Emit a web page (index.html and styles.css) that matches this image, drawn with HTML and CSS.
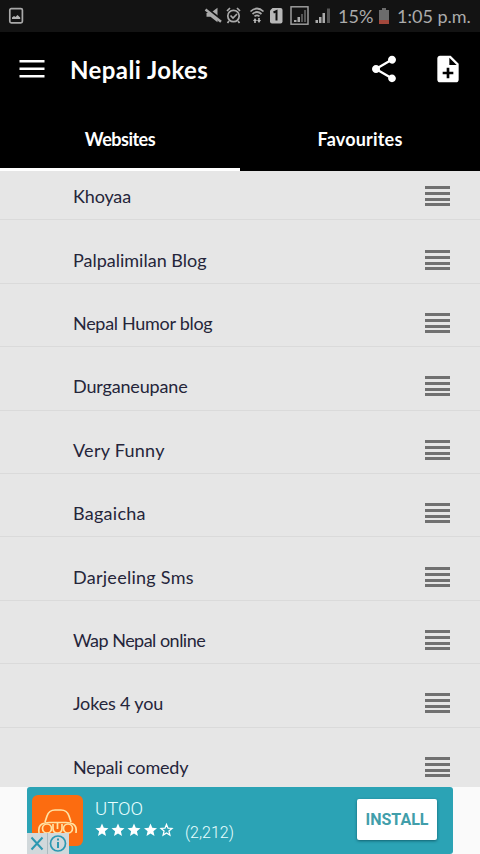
FILE: index.html
```html
<!DOCTYPE html>
<html lang="en">
<head>
<meta charset="utf-8">
<title>Nepali Jokes</title>
<link rel="stylesheet" href="styles.css">
</head>
<body>
<div class="screen">
  <header class="status">
    <svg class="shot" width="16" height="18" viewBox="0 0 16 18"><rect x="1.800" y="1.600" width="12.600" height="14.200" rx="1.500" fill="none" stroke="#a9a9a9" stroke-width="1.700"/><path d="M4 12v-1.500l2-1.500 1.500 1L9.500 8l2.700 2.500V12z" fill="#b5b5b5"/></svg>
    <svg class="signals" width="128" height="22" viewBox="204 5 128 22">
      <path d="M206.500 13h4l7-5.200v14.500l-7-5.500h-4z" fill="#aaa"/><path d="M205 7.500l17 13.500" stroke="#141414" stroke-width="3.500"/><path d="M205.500 9.500l15.500 12.200" stroke="#aaa" stroke-width="2.400"/>
      <g fill="none" stroke="#aaa" stroke-width="1.700"><circle cx="233.500" cy="16" r="5.700"/><path d="M230.500 15.500l2.500 2.500 4-4M227 11l3-3M240 11l-3-3M229 21l-1.500 2M238 21l1.500 2"/></g>
      <g fill="none" stroke="#aaa" stroke-width="1.700"><path d="M250.500 11.500q6.500-6 13 0M252.500 14q4.500-4 9 0M254.500 16.300q2.500-2 5 0"/></g><path d="M253 21l2-3 2 3h-1.200v2h-1.600v-2zM257 20h1.200v-2h1.600v2h1.200l-2 3z" fill="#bbb"/>
      <path d="M272.500 8h8q2 0 2 2v11.500q0 2-2 2h-8.500q-2 0-2-2V10.500z" fill="#b8b8b8"/><path d="M273.500 12.500l3-1.500v9.500" fill="none" stroke="#111" stroke-width="2"/>
      <rect x="291" y="6.800" width="17" height="17.400" fill="none" stroke="#a5a5a5" stroke-width="1.400"/><path d="M294 22v-2h2.500v2zM297.500 22v-5h2.500v5z" fill="#aaa"/><path d="M301 22v-8h2v8zM304 22V10h2v12z" fill="#555"/>
      <path d="M315.500 23v-3h2.500v3zM319 23v-6h2.500v6zM322.500 23V13h2.500v10z" fill="#aaa"/><path d="M327 23V8.500h3V23z" fill="#555"/>
    </svg>
    <span class="percent">15%</span>
    <svg class="battery" width="12" height="18" viewBox="0 0 12 18"><path d="M1 3h3V1h4v2h3v14H1z" fill="#6c6c6c"/><path d="M1 13h10v4H1z" fill="#a2483c"/></svg>
    <span class="clock">1:05 p.m.</span>
  </header>
  <div class="toolbar">
    <svg class="menu" width="26" height="20" viewBox="0 0 26 20"><path d="M.5 2.200h25M.5 9.700h25M.5 17.200h25" stroke="#fff" stroke-width="2.600"/></svg>
    <h1><span class="title">Nepali Jokes</span></h1>
    <svg class="share" width="32" height="32" viewBox="0 0 24 24"><path fill="#fff" d="M18 16.080c-.76 0-1.440.3-1.960.77L8.910 12.700c.05-.23.09-.46.09-.7s-.04-.47-.09-.7l7.050-4.110c.54.5 1.250.81 2.040.81 1.660 0 3-1.340 3-3s-1.340-3-3-3-3 1.340-3 3c0 .24.04.47.09.7L8.040 9.810C7.500 9.310 6.790 9 6 9c-1.660 0-3 1.340-3 3s1.340 3 3 3c.79 0 1.500-.31 2.040-.81l7.120 4.160c-.05.21-.08.43-.08.65 0 1.610 1.310 2.920 2.920 2.920s2.920-1.310 2.920-2.920-1.310-2.920-2.920-2.920z"/></svg>
    <svg class="add" width="32" height="32" viewBox="0 0 24 24"><path fill="#fff" d="M14 2H6c-1.100 0-2 .9-2 2v16c0 1.100.89 2 1.990 2H18c1.100 0 2-.9 2-2V8l-6-6zm2 14h-3v3h-2v-3H8v-2h3v-3h2v3h3v2zm-3-7V3.500L18.500 9H13z"/></svg>
  </div>
  <nav class="tabs"><div class="tab active"><span class="websites">Websites</span></div><div class="tab"><span class="favourites">Favourites</span></div></nav>
  <main>
    <ul class="list">
      <li><span class="snug">Khoyaa</span><i class="handle"></i></li>
      <li><span>Palpalimilan Blog</span><i class="handle"></i></li>
      <li><span class="tight">Nepal Humor blog</span><i class="handle"></i></li>
      <li><span class="snug">Durganeupane</span><i class="handle"></i></li>
      <li><span class="loose">Very Funny</span><i class="handle"></i></li>
      <li><span class="loose">Bagaicha</span><i class="handle"></i></li>
      <li><span class="loose">Darjeeling Sms</span><i class="handle"></i></li>
      <li><span class="tighter">Wap Nepal online</span><i class="handle"></i></li>
      <li><span class="snug">Jokes 4 you</span><i class="handle"></i></li>
      <li><span class="snug">Nepali comedy</span><i class="handle"></i></li>
    </ul>
  </main>
  <footer>
    <div class="ad">
      <svg class="logo" width="51" height="51" viewBox="0 0 51 51"><rect width="51" height="51" rx="6" fill="#fc6c10"/><g fill="none" stroke="#ffe2a4" stroke-width="1.700"><path d="M7 38q-1-7 3-9 3-1.500 7-1.500h17q4 0 7 1.500 4 2 3 9M13 27l2-6q2-6 8-6h6q6 0 8 6l2 6"/><circle cx="15" cy="33.500" r="4.500"/><circle cx="36" cy="33.500" r="4.500"/><path d="M21 29v4.500q0 4.500 4.500 4.500t4.500-4.500V29M25.500 28v6"/></g></svg>
      <div class="details">
        <div class="name">UTOO</div>
        <div class="rating">
          <svg width="79" height="16" viewBox="0 0 79 16"><defs><path id="star" d="M0-6.500l1.800 4.300 4.700.4-3.600 3.100 1.100 4.700L0 3.500-4 6l1.100-4.700-3.600-3.100 4.700-.4z"/></defs><g fill="#fff"><use href="#star" x="7" y="8"/><use href="#star" x="23" y="8"/><use href="#star" x="39" y="8"/><use href="#star" x="55.500" y="8"/></g><use href="#star" transform="translate(71.500 8) scale(.85)" fill="none" stroke="#fff" stroke-width="1.500"/></svg>
          <span>(2,212)</span>
        </div>
      </div>
      <button>INSTALL</button>
      <svg class="choices" width="42" height="21" viewBox="0 0 42 21"><path d="M0 0h42v21H0z" fill="#d1d8db"/><path d="M20.500 0v21" stroke="#aebbc0"/><g fill="none" stroke="#2c98b1" stroke-width="2"><path d="M4.500 4.500l11 12M15.500 4.500l-11 12"/><circle cx="31" cy="10.500" r="7.500" stroke-width="1.700"/><path d="M31 9v6M31 5.500v2"/></g></svg>
    </div>
  </footer>
</div>
</body>
</html>
```
FILE: styles.css
```css
* { box-sizing: border-box; }
body { margin: 0; background: #fafafa; font-family: Lato, sans-serif; }
svg { display: block; flex: none; }
span { white-space: nowrap; }
.screen { width: 480px; height: 854px; display: flex; flex-direction: column; overflow: hidden; }
.status { height: 32px; flex: none; background: #131313; color: #ababab; display: flex; align-items: center; padding-left: 8px; font-size: 18px; }
.signals { margin-left: 180px; }
.percent { width: 36px; margin-left: 6px; }
.battery { margin-left: 4px; }
.clock { margin-left: 7px; }
.toolbar { height: 78px; flex: none; background: #000; color: #fff; display: flex; align-items: center; padding: 0 16px 4px 19px; }
.toolbar h1 { margin: 0; width: 323px; padding: 2px 0 0 25px; font-size: 24px; line-height: 32px; font-weight: 700; }
.title { letter-spacing: .42px; }
.share { margin-right: 32px; }
.tabs { height: 61px; flex: none; display: flex; background: #000; color: #fff; font-size: 18px; font-weight: 700; }
.tab { flex: 1; display: flex; align-items: center; justify-content: center; border-bottom: 3px solid #000; }
.tab.active { border-color: #fff; }
.websites { letter-spacing: -.5px; }
.favourites { letter-spacing: .2px; }
main { height: 616px; flex: none; overflow: hidden; background: #e6e6e6; }
.list { list-style: none; margin: -14px 0 0; padding: 0; }
.list li { height: 63.4px; display: flex; align-items: center; justify-content: space-between; padding: 16px 30px 0 73px; border-bottom: 1px solid #dadada; font-size: 18px; color: #25253a; }
.loose { letter-spacing: .27px; }
.snug { letter-spacing: -.16px; }
.tight { letter-spacing: -.3px; }
.tighter { letter-spacing: -.52px; }
.handle { width: 25px; height: 20px; background: repeating-linear-gradient(#707070 0 3px, transparent 3px 5.800px); }
footer { flex: 1; padding: 0 27px; background: #fafafa; }
.ad { height: 67px; position: relative; background: #2ba3b5; border-radius: 3px; display: flex; padding-left: 5px; font-family: Roboto, sans-serif; color: #e9ffff; }
.logo { margin-top: 8px; }
.details { margin-left: 12px; width: 262px; padding-top: 11px; }
.name { font-size: 18.500px; line-height: 22px; font-weight: 300; }
.rating { display: flex; align-items: center; height: 20px; font-size: 16px; font-weight: 300; }
.rating span { margin: 4px 0 0 11px; }
button { width: 80px; height: 41px; margin-top: 12px; border: 0; border-radius: 2px; background: #fff; box-shadow: 0 1px 3px #12606f; color: #419eaa; font: 700 16px Roboto, sans-serif; padding: 0; }
.choices { position: absolute; left: 0; bottom: 0; }
```
